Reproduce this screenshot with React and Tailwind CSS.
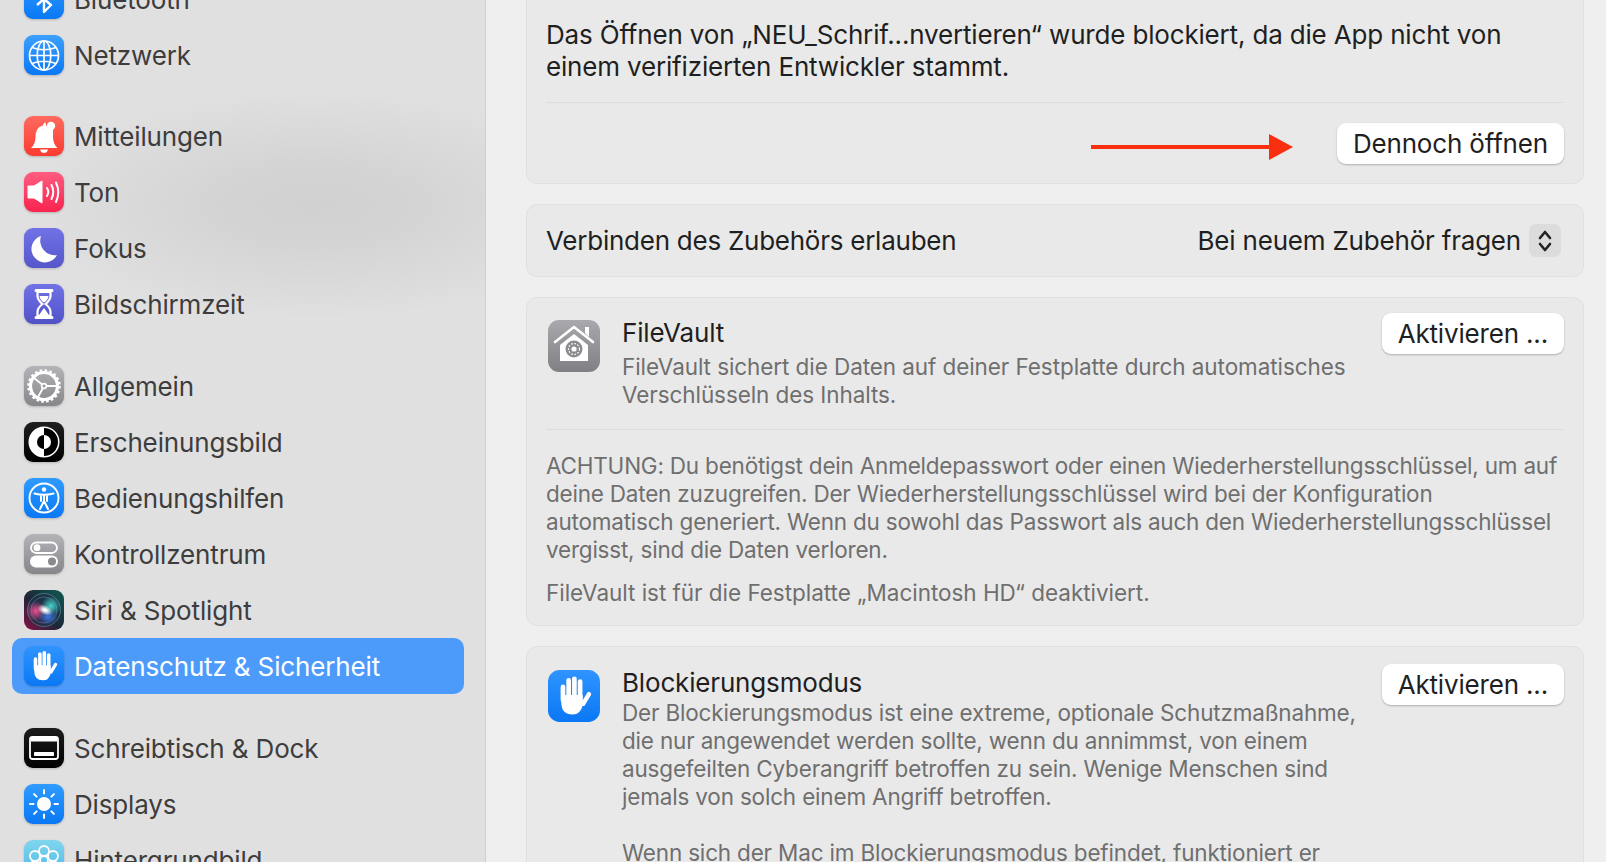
import { useId } from "react";

function IconBox({ from, to, children }) {
  const id = useId();
  return (
    <svg width="40" height="40" viewBox="0 0 40 40" className="shrink-0 drop-shadow-[0_1px_1px_rgba(0,0,0,0.2)]">
      <defs>
        <linearGradient id={id} x1="0" y1="0" x2="0" y2="1">
          <stop offset="0" stopColor={from} />
          <stop offset="1" stopColor={to} />
        </linearGradient>
      </defs>
      <rect width="40" height="40" rx="9" fill={`url(#${id})`} />
      {children}
    </svg>
  );
}

// white hand used for the sidebar row and the Blockierungsmodus card
function HandShape() {
  return (
    <g stroke="#fff" strokeLinecap="round" fill="none">
      <path d="M11.5 13 V23" strokeWidth="3.6" />
      <path d="M15.9 8 V21" strokeWidth="3.6" />
      <path d="M20.3 6.8 V21" strokeWidth="3.6" />
      <path d="M24.7 9 V22" strokeWidth="3.6" />
      <path d="M27 26 L31.5 18.5" strokeWidth="3.4" />
      <path d="M11 20 H26 V27 Q24.5 33.5 19 33.5 Q11 33.5 11 25 Z" fill="#fff" strokeWidth="1.5" strokeLinejoin="round" />
    </g>
  );
}

function Icon({ name }) {
  switch (name) {
    case "bluetooth":
      return (
        <IconBox from="#2f9bff" to="#0a78f5">
          <path d="M13 14 L27 26 L20 33 V7 L27 14 L13 26" fill="none" stroke="#fff" strokeWidth="2.4" strokeLinejoin="round" />
        </IconBox>
      );
    case "network":
      return (
        <IconBox from="#3d9fff" to="#0a78f5">
          <g fill="none" stroke="#fff" strokeWidth="1.7">
            <circle cx="20" cy="20.5" r="14.5" />
            <ellipse cx="20" cy="20.5" rx="6.8" ry="14.5" />
            <path d="M20 6 V35 M5.5 20.5 H34.5 M8 12.5 Q20 17 32 12.5 M8 28.5 Q20 24 32 28.5" />
          </g>
        </IconBox>
      );
    case "bell":
      return (
        <IconBox from="#ff6a5f" to="#fb3b30">
          <path d="M7 32 Q11.5 28 11.5 21 Q11.5 11 19 9.5 Q19.5 6.5 21.5 6.5 Q21.5 13 29 14 V21 Q29 28 33.5 32 Z" fill="#fff" />
          <circle cx="27" cy="10" r="4.2" fill="#fff" />
          <path d="M16 33.5 H24 Q23 37 20 37 Q17 37 16 33.5 Z" fill="#fff" />
        </IconBox>
      );
    case "sound":
      return (
        <IconBox from="#ff5c80" to="#f8244f">
          <path d="M4 14 H10 L18 9 V31 L10 26 H4 Z" fill="#fff" strokeLinejoin="round" stroke="#fff" />
          <g fill="none" stroke="#fff" strokeWidth="2" strokeLinecap="round">
            <path d="M23 16 Q25.5 20 23 24" />
            <path d="M27.5 13 Q31 20 27.5 27" />
            <path d="M32 10.5 Q36.5 20 32 30" />
          </g>
        </IconBox>
      );
    case "moon":
      return (
        <IconBox from="#7172e6" to="#5556c9">
          <path d="M17 8 A13.5 13.5 0 1 0 33 27 A14.5 14.5 0 0 1 17 8 Z" fill="#fff" />
        </IconBox>
      );
    case "hourglass":
      return (
        <IconBox from="#7172e6" to="#5151c8">
          <path d="M12 6.5 H28 M12 33.5 H28" stroke="#fff" strokeWidth="3" strokeLinecap="round" />
          <path d="M13.5 8 H26.5 V12 Q26.5 16 21.5 20 Q26.5 24 26.5 28 V32 H13.5 V28 Q13.5 24 18.5 20 Q13.5 16 13.5 12 Z" fill="none" stroke="#fff" strokeWidth="2.2" />
          <path d="M15.5 12 H24.5 Q24 16 20 18.5 Q16 16 15.5 12 Z M20 24 L25 31 H15 Z" fill="#fff" />
        </IconBox>
      );
    case "gear":
      return (
        <IconBox from="#b4b4b8" to="#86868a">
          <g fill="none" stroke="#fff">
            <circle cx="20" cy="20" r="13.5" strokeWidth="3.2" />
            <circle cx="20" cy="20" r="15.5" strokeWidth="2.6" strokeDasharray="2.6 2.27" />
            <path d="M20 20 L9.5 11.5 M20 20 L32.5 20 M20 20 L13.5 32" strokeWidth="1.8" />
            <circle cx="20" cy="20" r="2.4" strokeWidth="1.6" fill="#9c9ca0" />
          </g>
        </IconBox>
      );
    case "appearance":
      return (
        <IconBox from="#1f1f1f" to="#000000">
          <circle cx="20" cy="20" r="15.5" fill="#fff" />
          <path d="M20 6 A14 14 0 0 1 20 34 Z" fill="#000" />
          <path d="M20 13 A7 7 0 0 0 20 27 Z" fill="#000" />
          <path d="M20 13 A7 7 0 0 1 20 27 Z" fill="#fff" />
        </IconBox>
      );
    case "accessibility":
      return (
        <IconBox from="#2f9bff" to="#0a78f5">
          <circle cx="20" cy="20" r="14.5" fill="none" stroke="#fff" strokeWidth="1.9" />
          <circle cx="20" cy="11.5" r="2.2" fill="#fff" />
          <path d="M10.5 15.5 Q20 18 29.5 15.5 M20 17 V23 M20 23 L16 31 M20 23 L24 31 M17 17 V23 M23 17 V23" fill="none" stroke="#fff" strokeWidth="2" strokeLinecap="round" />
        </IconBox>
      );
    case "control":
      return (
        <IconBox from="#b4b4b8" to="#86868a">
          <rect x="7" y="8.5" width="26" height="10.5" rx="5.2" fill="none" stroke="#fff" strokeWidth="1.8" />
          <circle cx="13" cy="13.7" r="3.4" fill="#fff" />
          <rect x="6" y="21.5" width="28" height="12" rx="6" fill="#fff" />
          <circle cx="28" cy="27.5" r="4" fill="#8a8a8e" />
        </IconBox>
      );
    case "siri":
      return (
        <svg width="40" height="40" viewBox="0 0 40 40" className="shrink-0">
          <defs>
            <linearGradient id="siriBg" x1="0" y1="1" x2="1" y2="0">
              <stop offset="0" stopColor="#8a1248" />
              <stop offset="0.45" stopColor="#1d2536" />
              <stop offset="1" stopColor="#0f5c54" />
            </linearGradient>
            <radialGradient id="siriPink">
              <stop offset="0" stopColor="#ef4f92" />
              <stop offset="1" stopColor="#ef4f92" stopOpacity="0" />
            </radialGradient>
            <radialGradient id="siriTeal">
              <stop offset="0" stopColor="#46d8cf" />
              <stop offset="1" stopColor="#46d8cf" stopOpacity="0" />
            </radialGradient>
            <radialGradient id="siriBlue">
              <stop offset="0" stopColor="#3f78e8" />
              <stop offset="1" stopColor="#3f78e8" stopOpacity="0" />
            </radialGradient>
            <radialGradient id="siriCore">
              <stop offset="0.2" stopColor="#ffffff" />
              <stop offset="1" stopColor="#ffffff" stopOpacity="0" />
            </radialGradient>
          </defs>
          <rect width="40" height="40" rx="9" fill="url(#siriBg)" />
          <circle cx="20" cy="20" r="16.5" fill="#20304a" opacity="0.7" />
          <circle cx="20" cy="20" r="16.5" fill="none" stroke="#5f9aa5" strokeOpacity="0.6" strokeWidth="1" />
          <circle cx="20" cy="20" r="13" fill="none" stroke="#7aa3b5" strokeOpacity="0.4" strokeWidth="1" />
          <ellipse cx="12" cy="21" rx="10" ry="10" fill="url(#siriPink)" />
          <ellipse cx="27" cy="16" rx="10" ry="10" fill="url(#siriTeal)" />
          <ellipse cx="24" cy="27" rx="10" ry="8" fill="url(#siriBlue)" />
          <ellipse cx="21" cy="20" rx="8" ry="5" transform="rotate(25 21 20)" fill="url(#siriCore)" />
        </svg>
      );
    case "hand":
      return (
        <IconBox from="#2f94ff" to="#0a78f5">
          <HandShape />
        </IconBox>
      );
    case "dock":
      return (
        <IconBox from="#1c1c1c" to="#000000">
          <rect x="6" y="9" width="28" height="22" rx="2.5" fill="none" stroke="#fff" strokeWidth="1.8" />
          <rect x="7" y="10" width="26" height="3.5" fill="#fff" />
          <rect x="10" y="24" width="20" height="4" rx="0.8" fill="#fff" />
        </IconBox>
      );
    case "sun":
      return (
        <IconBox from="#2f9bff" to="#0a78f5">
          <circle cx="20" cy="20" r="7" fill="#fff" />
          <g stroke="#fff" strokeWidth="2" strokeLinecap="round">
            <path d="M20 6 V9.5 M20 30.5 V34 M6 20 H9.5 M30.5 20 H34 M10.1 10.1 L12.6 12.6 M27.4 27.4 L29.9 29.9 M29.9 10.1 L27.4 12.6 M12.6 27.4 L10.1 29.9" />
          </g>
        </IconBox>
      );
    case "wallpaper":
      return (
        <IconBox from="#7fd6ee" to="#4cb4e8">
          <g fill="none" stroke="#fff" strokeWidth="1.8">
            <circle cx="20" cy="11" r="5" />
            <circle cx="11" cy="16" r="5" />
            <circle cx="29" cy="16" r="5" />
            <circle cx="11" cy="26" r="5" />
            <circle cx="29" cy="26" r="5" />
            <circle cx="20" cy="20" r="4" />
          </g>
        </IconBox>
      );
    default:
      return null;
  }
}

const sidebarGroups = [
  { top: "", items: [["bluetooth", "Bluetooth"], ["network", "Netzwerk"]] },
  { top: "mt-[25px]", items: [["bell", "Mitteilungen"], ["sound", "Ton"], ["moon", "Fokus"], ["hourglass", "Bildschirmzeit"]] },
  {
    top: "mt-[26px]",
    items: [
      ["gear", "Allgemein"],
      ["appearance", "Erscheinungsbild"],
      ["accessibility", "Bedienungshilfen"],
      ["control", "Kontrollzentrum"],
      ["siri", "Siri & Spotlight"],
      ["hand", "Datenschutz & Sicherheit"],
    ],
  },
  { top: "mt-[26px]", items: [["dock", "Schreibtisch & Dock"], ["sun", "Displays"], ["wallpaper", "Hintergrundbild"]] },
];

function Sidebar() {
  return (
    <aside className="w-[486px] shrink-0 h-full overflow-hidden border-r border-[#cfcfcf] bg-[#e1e0e1] bg-[radial-gradient(ellipse_290px_115px_at_315px_205px,#d1d1d1_0%,#d4d4d4_35%,rgba(225,224,225,0)_100%)]">
      <div className="mt-[-29px] pl-3 pr-[21px]">
        {sidebarGroups.map((group) => (
          <div key={group.items[0][0]} className={group.top}>
            {group.items.map(([icon, label]) => {
              const active = icon === "hand";
              return (
                <div
                  key={icon}
                  className={`h-14 flex items-center gap-[10px] pl-3 rounded-[10px] ${
                    active ? "bg-[#4c9bfb] text-white" : "text-[#3d3d3d]"
                  }`}
                >
                  <Icon name={icon} />
                  <span className="pt-px text-[26px] leading-8 tracking-[-0.15px] whitespace-nowrap">{label}</span>
                </div>
              );
            })}
          </div>
        ))}
      </div>
    </aside>
  );
}

function MacButton({ children }) {
  return (
    <button className="h-[41px] px-[16px] shrink-0 rounded-[9px] bg-white text-[26px] leading-8 tracking-[-0.17px] text-[#1f1f1f] whitespace-nowrap shadow-[0_1px_2px_rgba(0,0,0,0.25)]">
      {children}
    </button>
  );
}

function Card({ className = "", children }) {
  return <section className={`rounded-[11px] border border-[#e0e0e0] bg-[#e9e9e9] px-[19px] ${className}`}>{children}</section>;
}

const Divider = ({ className }) => <div className={`h-px bg-[#dcdcdc] ${className}`} />;

const grayText = "text-[22.5px] leading-7 text-[#6f6f6f] whitespace-nowrap";

export default function App() {
  return (
    <div className="w-[1606px] h-[862px] overflow-hidden flex bg-[#efefef] font-['Inter','Liberation_Sans',sans-serif]">
      <Sidebar />
      <main className="flex-1 min-w-0 mt-[-10px] pl-10 pr-[22px] flex flex-col gap-5 text-[#1f1f1f]">
        <Card className="pt-[28px] pb-[19px] shrink-0">
          <p className="text-[26px] leading-8 tracking-[-0.17px] whitespace-nowrap">
            Das Öffnen von „NEU_Schrif...nvertieren“ wurde blockiert, da die App nicht von
            <br />
            einem verifizierten Entwickler stammt.
          </p>
          <Divider className="mt-[19px]" />
          <div className="mt-5 flex items-center justify-end">
            <svg width="202" height="26" viewBox="0 0 202 26" className="mr-[44px] mt-[7px]">
              <path d="M0 11 H178 V0 L202 13 L178 26 V15 H0 Z" fill="#f92f10" />
            </svg>
            <MacButton>Dennoch öffnen</MacButton>
          </div>
        </Card>

        <Card className="h-[73px] shrink-0 flex items-center justify-between pr-[22px]">
          <span className="text-[26px] leading-8 tracking-[-0.25px]">Verbinden des Zubehörs erlauben</span>
          <div className="flex items-center gap-2">
            <span className="text-[26px] leading-8 tracking-[-0.2px]">Bei neuem Zubehör fragen</span>
            <div className="w-[32px] h-[33px] rounded-[7px] bg-[#dcdcdc] flex items-center justify-center">
              <svg width="16" height="26" viewBox="0 0 16 26" fill="none" stroke="#222" strokeWidth="2.6" strokeLinecap="round" strokeLinejoin="round">
                <path d="M3 10 L8 4 L13 10 M3 16 L8 22 L13 16" />
              </svg>
            </div>
          </div>
        </Card>

        <Card className="pt-[15px] pb-[18px] shrink-0">
          <div className="flex items-start">
            <svg width="52" height="52" viewBox="0 0 52 52" className="ml-0.5 mt-[7px] shrink-0">
              <defs>
                <linearGradient id="vaultBg" x1="0" y1="0" x2="0" y2="1">
                  <stop offset="0" stopColor="#a9a9ad" />
                  <stop offset="1" stopColor="#808084" />
                </linearGradient>
              </defs>
              <rect width="52" height="52" rx="11" fill="url(#vaultBg)" />
              <path d="M7 22 L26 7 L45 22" fill="none" stroke="#fff" strokeWidth="2.6" strokeLinecap="round" strokeLinejoin="round" />
              <path d="M37 13 V7 H41 V17 Z" fill="#fff" />
              <path d="M12 25 L26 14 L40 25 V41 H12 Z" fill="#fff" />
              <circle cx="26" cy="29" r="8.5" fill="#8c8c90" />
              <circle cx="26" cy="29" r="5.5" fill="none" stroke="#fff" strokeWidth="1.2" strokeDasharray="1.6 1.6" />
              <circle cx="26" cy="29" r="2.6" fill="#fff" />
            </svg>
            <div className="ml-[22px] flex-1 min-w-0 pt-1">
              <h3 className="text-[26px] leading-8 tracking-[-0.17px] font-normal">FileVault</h3>
              <p className={`mt-1 tracking-[-0.08px] ${grayText}`}>
                FileVault sichert die Daten auf deiner Festplatte durch automatisches
                <br />
                Verschlüsseln des Inhalts.
              </p>
            </div>
            <MacButton>Aktivieren ...</MacButton>
          </div>
          <Divider className="mt-5" />
          <p className={`mt-[22px] tracking-[-0.21px] ${grayText}`}>
            ACHTUNG: Du benötigst dein Anmeldepasswort oder einen Wiederherstellungsschlüssel, um auf
            <br />
            deine Daten zuzugreifen. Der Wiederherstellungsschlüssel wird bei der Konfiguration
            <br />
            automatisch generiert. Wenn du sowohl das Passwort als auch den Wiederherstellungsschlüssel
            <br />
            vergisst, sind die Daten verloren.
          </p>
          <p className={`mt-[15px] tracking-[-0.03px] ${grayText}`}>FileVault ist für die Festplatte „Macintosh HD“ deaktiviert.</p>
        </Card>

        <Card className="pt-[17px] pb-4 shrink-0">
          <div className="flex items-start">
            <svg width="52" height="52" viewBox="0 0 40 40" className="ml-0.5 mt-[6px] shrink-0">
              <defs>
                <linearGradient id="lockBg" x1="0" y1="0" x2="0" y2="1">
                  <stop offset="0" stopColor="#2f94ff" />
                  <stop offset="1" stopColor="#0a78f5" />
                </linearGradient>
              </defs>
              <rect width="40" height="40" rx="9" fill="url(#lockBg)" />
              <HandShape />
            </svg>
            <div className="ml-[22px] flex-1 min-w-0 pt-[3px]">
              <h3 className="text-[26px] leading-8 tracking-[-0.17px] font-normal">Blockierungsmodus</h3>
              <p className={`tracking-[-0.18px] ${grayText}`}>
                Der Blockierungsmodus ist eine extreme, optionale Schutzmaßnahme,
                <br />
                die nur angewendet werden sollte, wenn du annimmst, von einem
                <br />
                ausgefeilten Cyberangriff betroffen zu sein. Wenige Menschen sind
                <br />
                jemals von solch einem Angriff betroffen.
                <br />
                <br />
                Wenn sich der Mac im Blockierungsmodus befindet, funktioniert er
              </p>
            </div>
            <MacButton>Aktivieren ...</MacButton>
          </div>
        </Card>
      </main>
    </div>
  );
}
